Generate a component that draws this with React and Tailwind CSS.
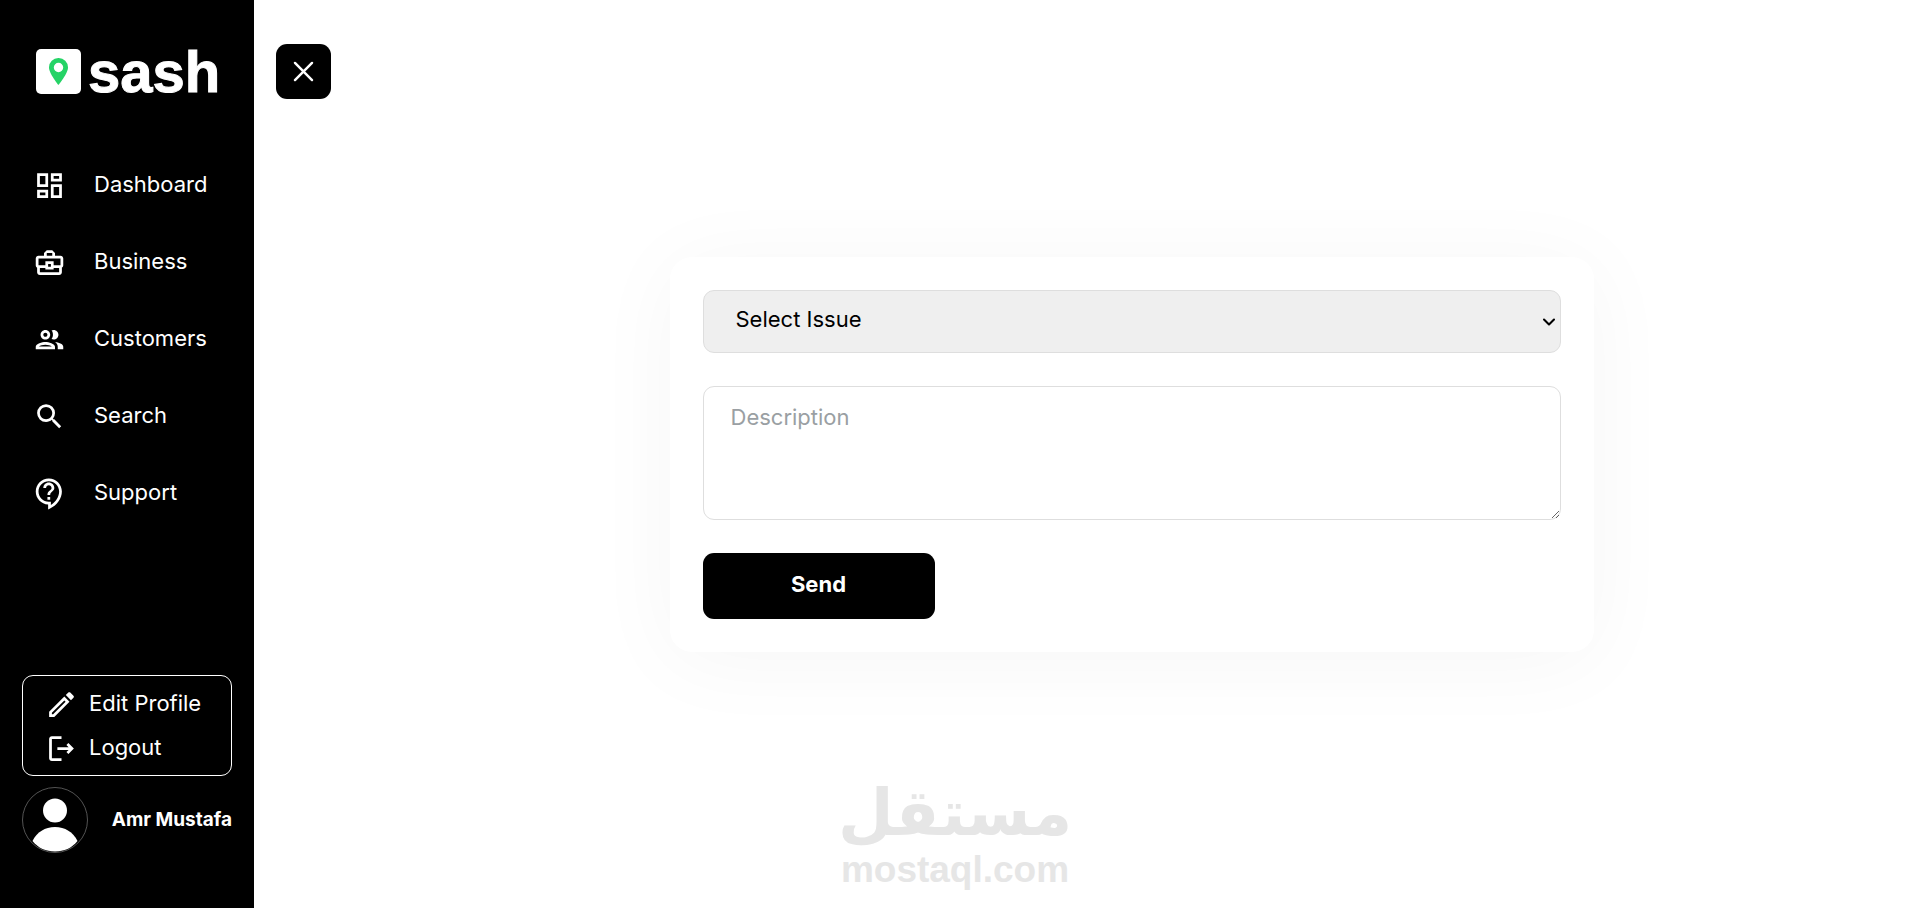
import { useState } from "react";
import {
  MdOutlineDashboard,
  MdOutlineBusinessCenter,
  MdOutlineGroup,
  MdSearch,
  MdOutlineContactSupport,
  MdOutlineEdit,
} from "react-icons/md";
import { IoCloseOutline } from "react-icons/io5";
import { ChevronDown } from "lucide-react";

const links = [
  { name: "Dashboard", icon: MdOutlineDashboard },
  { name: "Business", icon: MdOutlineBusinessCenter },
  { name: "Customers", icon: MdOutlineGroup },
  { name: "Search", icon: MdSearch },
  { name: "Support", icon: MdOutlineContactSupport },
];

function LogoutIcon({ className }) {
  return (
    <svg viewBox="0 0 24 24" fill="currentColor" className={className}>
      <path d="M17 8l-1.410 1.410L17.170 11H9v2h8.170l-1.580 1.580L17 16l4-4-4-4zM5 5h7V3H5c-1.100 0-2 .9-2 2v14c0 1.100.9 2 2 2h7v-2H5V5z" />
    </svg>
  );
}

function Logo() {
  return (
    <a href="#" className="flex items-center gap-[7px] pl-[14px]">
      <span className="flex size-[45px] shrink-0 items-center justify-center rounded-[5px] bg-white">
        <svg viewBox="0 0 19 27" className="h-[27px] w-[19px]">
          <path
            fill="#25d366"
            fillRule="evenodd"
            d="M9.5 0A9.4 9.4 0 0 0 0 9.5C0 15.500 9.500 27 9.500 27S19 15.500 19 9.500A9.400 9.400 0 0 0 9.500 0Zm0 4.800a4.700 4.700 0 1 1 0 9.400a4.700 4.700 0 0 1 0-9.400Z"
          />
        </svg>
      </span>
      <span className="font-['Liberation_Sans',sans-serif] text-[58px] leading-[45px] font-bold text-white [-webkit-text-stroke:1px_white]">
        sash
      </span>
    </a>
  );
}

function Sidebar() {
  return (
    <aside className="flex w-[254px] shrink-0 flex-col bg-black px-[22px] pt-[49px] pb-[55px] text-white">
      <Logo />

      <nav className="mt-[69px] flex flex-col gap-[33px]">
        {links.map(({ name, icon: Icon }) => (
          <a key={name} href="#" className="flex h-[44px] items-center gap-[28px] px-[11px]">
            <Icon className="size-[33px] shrink-0" />
            <span className="pb-[2px]">{name}</span>
          </a>
        ))}
      </nav>

      {/* Profile */}
      <div className="mt-auto">
        <div className="rounded-[11px] border border-white px-[22px] pt-[6px] pb-[5px]">
          <button className="flex h-[44px] items-center gap-[11px]">
            <MdOutlineEdit className="size-[33px]" />
            <span className="pb-[2px]">Edit Profile</span>
          </button>
          <button className="flex h-[44px] items-center gap-[11px]">
            <LogoutIcon className="size-[33px]" />
            <span className="pb-[2px]">Logout</span>
          </button>
        </div>
        <div className="mt-[11px] flex items-center justify-between">
          <svg viewBox="0 0 66 66" className="size-[66px]">
            <circle cx="33" cy="33" r="32.500" fill="none" stroke="#777" strokeWidth="0.700" />
            <circle cx="33" cy="23.500" r="12" fill="#fff" />
            <path fill="#fff" d="M10.500 54C15 45 23 40 33 40s18 5 22.500 14C50 61 42 64.500 33 64.500S16 61 10.500 54Z" />
          </svg>
          <p className="text-[19px] font-bold whitespace-nowrap">Amr Mustafa</p>
        </div>
      </div>
    </aside>
  );
}

function SupportForm() {
  const [issue, setIssue] = useState("");
  const [description, setDescription] = useState("");

  return (
    <form
      onSubmit={(e) => e.preventDefault()}
      className="flex w-full max-w-[924px] flex-col items-start gap-[33px] rounded-[22px] bg-white p-[33px] shadow-[0_8px_88px_rgba(0,0,0,0.04)]"
    >
      <div className="relative w-full">
        <select
          aria-label="Select Issue"
          value={issue}
          onChange={(e) => setIssue(e.target.value)}
          className="block h-[63px] w-full appearance-none rounded-[11px] border border-[#dedede] bg-[#efefef] px-[32px] pb-[3px] text-black"
        >
          <option value="">Select Issue</option>
        </select>
        <ChevronDown
          strokeWidth={2.5}
          className="pointer-events-none absolute top-[22px] right-[2px] size-[20px] text-black"
        />
      </div>
      <textarea
        aria-label="Description"
        placeholder="Description"
        value={description}
        onChange={(e) => setDescription(e.target.value)}
        className="block h-[134px] w-full rounded-[11px] border border-[#dedede] px-[27px] py-[17px] leading-[27px] outline-none placeholder:text-[#9a9fa3]"
      />
      <button className="h-[66px] w-[232px] rounded-[11px] bg-black pb-[3px] font-bold text-white">Send</button>
    </form>
  );
}

export default function App() {
  const [open, setOpen] = useState(true);

  return (
    <div className="relative flex min-h-screen bg-white font-['Inter',sans-serif] text-[22px]">
      {open && <Sidebar />}

      <div className="p-[22px] pt-[44px]">
        <button
          aria-label="Toggle menu"
          onClick={() => setOpen(!open)}
          className="flex size-[55px] items-center justify-center rounded-[11px] bg-black text-white"
        >
          <IoCloseOutline className="size-[39px]" />
        </button>
      </div>

      <main className="flex flex-1 items-center justify-center">
        <SupportForm />
      </main>

      {/* Watermark */}
      <div className="pointer-events-none absolute inset-x-0 bottom-[18px] flex flex-col items-center font-bold text-[#e6e6e6]">
        <span dir="rtl" lang="ar" className="font-['DejaVu_Sans',sans-serif] text-[64px] leading-[74px]">
          مستقل
        </span>
        <span className="font-['Liberation_Sans',sans-serif] text-[37px] leading-[40px]">mostaql.com</span>
      </div>
    </div>
  );
}
